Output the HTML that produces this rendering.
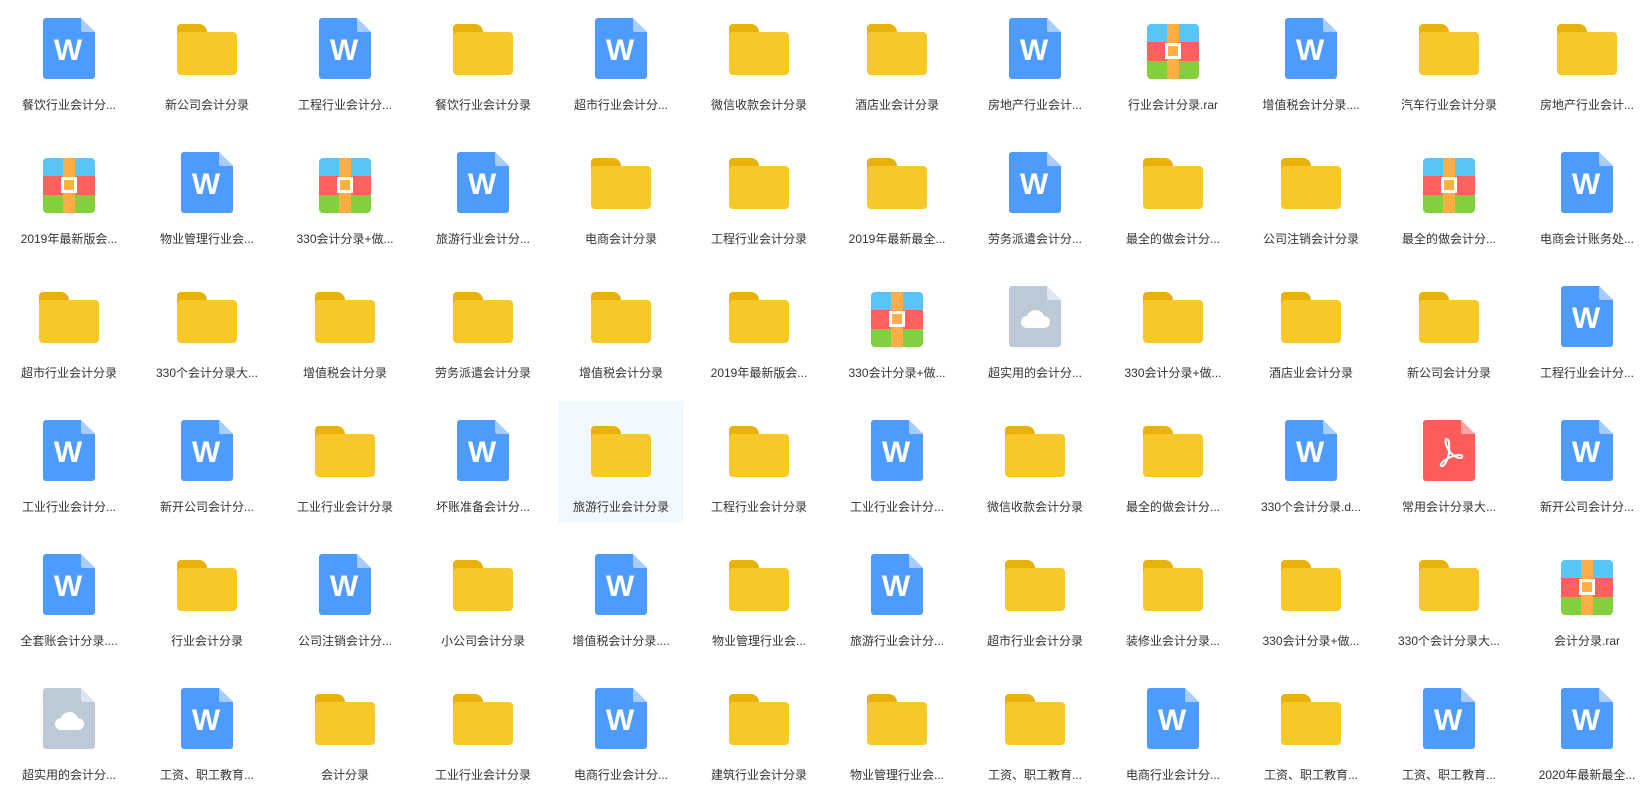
<!DOCTYPE html>
<html><head><meta charset="utf-8">
<style>
html,body{margin:0;padding:0;background:#fff;width:1646px;height:799px;overflow:hidden;position:relative;font-family:"Liberation Sans","Noto Sans CJK SC",sans-serif;}
.hl{position:absolute;left:558px;top:401px;width:126px;height:122px;background:#f1f8fe;}
.ic{position:absolute;}
.lb{position:absolute;width:130px;text-align:center;font-size:12px;line-height:16px;color:#333;white-space:nowrap;}
</style></head><body>
<div class="hl"></div>
<div id="g"></div>
<script>
var W='<svg width="52" height="61" viewBox="0 0 52 61"><path d="M3 0H38L52 14V58a3 3 0 0 1-3 3H3a3 3 0 0 1-3-3V3a3 3 0 0 1 3-3z" fill="#4e9bfe"/><path d="M38 0L52 14H40a2 2 0 0 1-2-2z" fill="#a8cdfd"/><text x="25" y="42" text-anchor="middle" font-family="Liberation Sans,sans-serif" font-weight="bold" font-size="30" fill="#fff">W</text></svg>';
var C='<svg width="52" height="61" viewBox="0 0 52 61"><path d="M3 0H38L52 14V58a3 3 0 0 1-3 3H3a3 3 0 0 1-3-3V3a3 3 0 0 1 3-3z" fill="#bbcad6"/><path d="M38 0L52 14H40a2 2 0 0 1-2-2z" fill="#dde6ee"/><path d="M18 42a6 6 0 0 1 0-12a9 9 0 0 1 17 0a6 6 0 0 1 0 12z" fill="#fff"/></svg>';
var P='<svg width="52" height="61" viewBox="0 0 52 61"><path d="M3 0H38L52 14V58a3 3 0 0 1-3 3H3a3 3 0 0 1-3-3V3a3 3 0 0 1 3-3z" fill="#fc5c5c"/><path d="M38 0L52 14H40a2 2 0 0 1-2-2z" fill="#fda5a5"/><path d="M24 19c-2 0-2 3 0 8c2 5 8 11 13 11c3 0 3-3 0-3c-6 0-16 4-19 9c-1 2 1 3 3 1c4-5 6-12 5-22c0-2-1-4-2-4z" fill="none" stroke="#fff" stroke-width="2" stroke-linejoin="round"/></svg>';
var F='<svg width="60" height="51" viewBox="0 0 60 51"><path d="M4 0H22a8 8 0 0 1 8 8V12H0V4a4 4 0 0 1 4-4z" fill="#e8b20b"/><rect x="0" y="8" width="60" height="43" rx="4" fill="#f7c82a"/></svg>';
var R='<svg width="52" height="55" viewBox="0 0 52 55"><clipPath id="cp"><rect width="52" height="55" rx="4"/></clipPath><g clip-path="url(#cp)"><rect width="52" height="18" fill="#57c6f7"/><rect y="18" width="52" height="19" fill="#fc6160"/><rect y="37" width="52" height="18" fill="#84cf3e"/><rect x="20" width="12" height="55" fill="#feae45"/><rect x="18" y="19" width="16" height="16" fill="#fff"/><rect x="21" y="22" width="10" height="10" fill="#feae45"/></g></svg>';
var d=[
"W餐饮行业会计分...|F新公司会计分录|W工程行业会计分...|F餐饮行业会计分录|W超市行业会计分...|F微信收款会计分录|F酒店业会计分录|W房地产行业会计...|R行业会计分录.rar|W增值税会计分录....|F汽车行业会计分录|F房地产行业会计...",
"R2019年最新版会...|W物业管理行业会...|R330会计分录+做...|W旅游行业会计分...|F电商会计分录|F工程行业会计分录|F2019年最新最全...|W劳务派遣会计分...|F最全的做会计分...|F公司注销会计分录|R最全的做会计分...|W电商会计账务处...",
"F超市行业会计分录|F330个会计分录大...|F增值税会计分录|F劳务派遣会计分录|F增值税会计分录|F2019年最新版会...|R330会计分录+做...|C超实用的会计分...|F330会计分录+做...|F酒店业会计分录|F新公司会计分录|W工程行业会计分...",
"W工业行业会计分...|W新开公司会计分...|F工业行业会计分录|W坏账准备会计分...|F旅游行业会计分录|F工程行业会计分录|W工业行业会计分...|F微信收款会计分录|F最全的做会计分...|W330个会计分录.d...|P常用会计分录大...|W新开公司会计分...",
"W全套账会计分录....|F行业会计分录|W公司注销会计分...|F小公司会计分录|W增值税会计分录....|F物业管理行业会...|W旅游行业会计分...|F超市行业会计分录|F装修业会计分录...|F330会计分录+做...|F330个会计分录大...|R会计分录.rar",
"C超实用的会计分...|W工资、职工教育...|F会计分录|F工业行业会计分录|W电商行业会计分...|F建筑行业会计分录|F物业管理行业会...|F工资、职工教育...|W电商行业会计分...|F工资、职工教育...|W工资、职工教育...|W2020年最新最全..."];
var h='';
d.forEach(function(row,r){row.split('|').forEach(function(it,c){
 var t=it[0],s=it.slice(1),cx=69+138*c,top=18+134*r;
 var svg={W:W,C:C,P:P,F:F,R:R}[t],w=t=='F'?60:52,y=top+(t=='F'||t=='R'?6:0);
 if(t=='R')svg=svg.replace(/cp/g,'cp'+r+'_'+c);
 h+='<div class="ic" style="left:'+(cx-w/2)+'px;top:'+y+'px">'+svg+'</div>';
 h+='<div class="lb" style="left:'+(cx-65)+'px;top:'+(top+79)+'px">'+s+'</div>';
});});
document.getElementById('g').innerHTML=h;
</script>
</body></html>
